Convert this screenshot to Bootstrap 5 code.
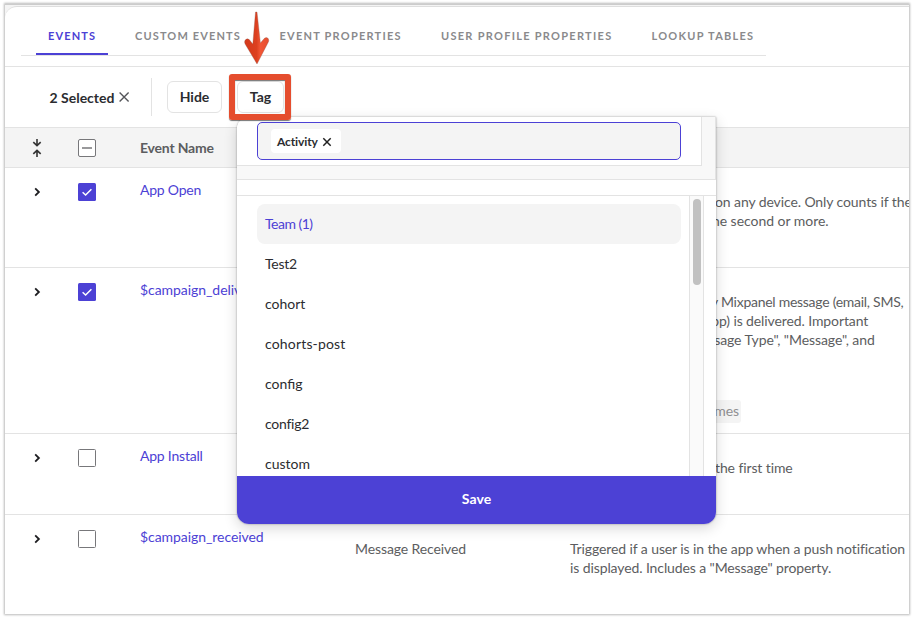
<!DOCTYPE html>
<html lang="en">
<head>
<meta charset="utf-8">
<meta name="viewport" content="width=device-width, initial-scale=1">
<title>Events</title>
<link href="https://cdn.jsdelivr.net/npm/bootstrap@5.3.0/dist/css/bootstrap.min.css" rel="stylesheet">
<style>
  :root { --brand: #4c41d5; --line: #e3e3e3; --ink: #2b2c30; --soft: #5c5d60; }
  body { font-family: Lato, sans-serif; font-size: 14px; line-height: 19px; color: var(--soft); background: #fff; height: 619px; overflow: hidden; }
  .frame { margin: 4px 5px 0 5px; height: 610px; width: 904px; border-top: 1px solid #ccc; background: #f4f4f4; box-shadow: 0 0 2px 1px rgba(0,0,0,.27); overflow: hidden; }
  .sheet { margin-top: 1px; height: 608px; border-top: 1px solid #dedede; border-radius: 12px 0 0 0; background: #fff; overflow: hidden; }
  .tabs-wrap { height: 60px; border-bottom: 1px solid var(--line); }
  .tabs { height: 49px; width: 745px; margin-left: 16px; padding-left: 15px; border-bottom: 1px solid var(--line); }
  .tab { height: 48px; padding: 19px 0 0 12px; font-size: 11px; font-weight: 700; line-height: 20px; letter-spacing: 1.23px; color: #8a8a8c; white-space: nowrap; }
  .tab.on { width: 72px; color: var(--brand); border-bottom: 2px solid var(--brand); letter-spacing: 1.15px; }
  .t2 { width: 144.5px; margin-left: 15px; letter-spacing: 1.14px; } .t3 { width: 161.5px; } .t4 { width: 210.5px; letter-spacing: 1.28px; } .t5 { letter-spacing: 1.26px; }
  .tools { height: 61px; border-bottom: 1px solid var(--line); color: var(--ink); font-weight: 700; }
  .picked { width: 147px; padding-left: 44.5px; height: 38px; border-right: 1px solid var(--line); margin-right: 15px; }
  .tool { height: 32px; border: 1px solid var(--line); border-radius: 6px; background: #fff; color: var(--ink); font-size: 14px; font-weight: 700; padding: 0; line-height: 30px; }
  .tool-hide { width: 55px; } .tool-tag { width: 47px; margin-left: 15px; }
  .line { display: grid; grid-template-columns: 73px 62px 215px 215px 1fr; border-bottom: 1px solid var(--line); white-space: nowrap; }
  .line > :first-child { padding-left: 26px; }
  .line svg { display: block; }
  .titles { height: 40px; background: #f4f4f4; font-weight: 700; align-items: center; }
  .titles span { display: block; margin-top: -1px; letter-spacing: -.2px; }
  .r1 { height: 100px; } .r2 { height: 166px; } .r3 { height: 81px; } .r4 { height: 100px; border-bottom: 0; }
  .line:not(.titles) > :first-child { padding-top: 18px; }
  .tick { padding-top: 15px; }
  .name { padding-top: 12px; color: var(--brand); letter-spacing: -.06px; }
  .name.tight { letter-spacing: -.22px; }
  .info { padding-top: 24px; letter-spacing: -.105px; }
  .key { color: #8f8f91; background: #f4f4f4; border-radius: 3px; width: 120px; height: 23px; line-height: 22px; margin: 51px 0 0 51px; text-align: right; padding-right: 2px; }
  .b1 { margin-left: 145px; letter-spacing: -.1px; } .b2 { margin-left: 134px; letter-spacing: -.03px; }
  .b3 { margin-left: 127px; letter-spacing: -.27px; } .b4 { margin-left: 131px; } .b5 { margin-left: 113px; letter-spacing: -.07px; } .b6 { margin-left: 145px; }
  .menu-pop { position: absolute; left: 237px; top: 117px; width: 479px; height: 407px; background: #fff; border-radius: 12px 0 12px 12px; box-shadow: 0 0 2px rgba(0,0,0,.4), 0 4px 14px rgba(0,0,0,.16); overflow: hidden; color: var(--ink); }
  .search { height: 63px; background: #f8f8f8; border-bottom: 1px solid var(--line); border-right: 1px solid var(--line); }
  .search-in { width: 465px; height: 49px; background: #fff; border-right: 1px solid var(--line); border-bottom: 1px solid var(--line); padding: 5px 0 0 20px; }
  .field { width: 424px; height: 38px; border: 1px solid var(--brand); border-radius: 5px; background: #f4f4f4; padding-left: 13px; }
  .chip { height: 24px; width: 70px; background: #fff; border-radius: 4px; font-size: 12px; font-weight: 700; padding-left: 6px; letter-spacing: -.12px; }
  .chip svg { margin-top: 1px; }
  .list-wrap { height: 281px; margin-top: 15px; border-top: 1px solid var(--line); overflow: hidden; }
  .opts { width: 452px; padding: 8px 8px 0 20px; flex: none; }
  .opt { height: 40px; line-height: 40px; border-radius: 8px; padding-left: 8px; }
  .opt.on { background: #f4f4f4; color: var(--brand); letter-spacing: -.5px; }
  .opt.tight { letter-spacing: -.25px; } .opt.wide { letter-spacing: .17px; }
  .rail { width: 15px; background: #fafafa; border: 1px solid var(--line); border-width: 0 1px; padding: 3px 3px 0 3px; height: 281px; }
  .thumb { width: 8px; height: 86px; border-radius: 4px; background: #c1c1c1; }
  .save { height: 48px; background: var(--brand); color: #fff; border: 0; border-radius: 0; font-weight: 700; font-size: 14px; width: 100%; padding: 0 0 3px; display: block; letter-spacing: .1px; }
  .mark-box { position: absolute; left: 229px; top: 74px; width: 62px; height: 46px; border: 6px solid #e54d2e; border-radius: 3px; box-shadow: 0 1px 1px rgba(0,0,0,.55), inset 0 1px 1px rgba(0,0,0,.55); }
  .mark-arrow { position: absolute; left: 240px; top: 10px; }
</style>
<script src="https://cdn.jsdelivr.net/npm/bootstrap@5.3.0/dist/js/bootstrap.bundle.min.js"></script>
</head>
<body>
<svg class="d-none">
  <symbol id="chev" viewBox="0 0 12 12"><path d="M4.2 2.4 7.9 6 4.2 9.6" fill="none" stroke="#1d1d20" stroke-width="1.8"/></symbol>
  <symbol id="box" viewBox="0 0 18 18"><rect x=".5" y=".5" width="17" height="17" rx="1" fill="#fff" stroke="#77777a"/></symbol>
  <symbol id="boxon" viewBox="0 0 18 18"><rect width="18" height="18" rx="1.5" fill="#4c41d5"/><path d="m4.6 9.2 3 2.8 5.8-5.8" fill="none" stroke="#fff" stroke-width="1.5"/></symbol>
</svg>
<main class="frame">
  <div class="sheet">
    <div class="tabs-wrap">
      <nav class="tabs d-flex">
        <div class="tab on">EVENTS</div>
        <div class="tab t2">CUSTOM EVENTS</div>
        <div class="tab t3">EVENT PROPERTIES</div>
        <div class="tab t4">USER PROFILE PROPERTIES</div>
        <div class="tab t5">LOOKUP TABLES</div>
      </nav>
    </div>
    <div class="tools d-flex align-items-center">
      <div class="picked d-flex align-items-center"><span>2 Selected</span>
        <svg class="ms-1" width="12" height="12" viewBox="0 0 12 12"><path d="m1.6 1.6 9 9m0-9-9 9" stroke="#55565a" stroke-width="1.4"/></svg>
      </div>
      <button class="tool tool-hide">Hide</button>
      <button class="tool tool-tag">Tag</button>
    </div>
    <div class="line titles">
      <div><svg width="12" height="18" viewBox="0 0 12 18"><path d="M6 0v6M2.3 3.2 6 6.7l3.7-3.5M6 18v-6M2.3 14.8 6 11.3l3.7 3.5" fill="none" stroke="#333" stroke-width="1.6"/></svg></div>
      <div><svg width="18" height="18" viewBox="0 0 18 18"><rect x=".5" y=".5" width="17" height="17" rx="1.5" fill="#fff" stroke="#77777a"/><path d="M4 9h10" stroke="#77777a" stroke-width="1.6"/></svg></div>
      <div><span>Event Name</span></div>
    </div>
    <div class="line r1">
      <div><svg width="12" height="12"><use href="#chev"/></svg></div>
      <div class="tick"><svg width="18" height="18"><use href="#boxon"/></svg></div>
      <div class="name tight">App Open</div><div></div>
      <div class="info"><div class="b1">on any device. Only counts if the</div><div class="b2">one second or more.</div></div>
    </div>
    <div class="line r2">
      <div><svg width="12" height="12"><use href="#chev"/></svg></div>
      <div class="tick"><svg width="18" height="18"><use href="#boxon"/></svg></div>
      <div class="name">$campaign_delivered</div><div></div>
      <div class="info"><div class="b3">any Mixpanel message (email, SMS,</div><div class="b4">(app) is delivered. Important</div><div class="b5">"Message Type", "Message", and</div><div class="key">names</div></div>
    </div>
    <div class="line r3">
      <div><svg width="12" height="12"><use href="#chev"/></svg></div>
      <div class="tick"><svg width="18" height="18"><use href="#box"/></svg></div>
      <div class="name tight">App Install</div><div></div>
      <div class="info"><div class="b6">the first time</div></div>
    </div>
    <div class="line r4">
      <div><svg width="12" height="12"><use href="#chev"/></svg></div>
      <div class="tick"><svg width="18" height="18"><use href="#box"/></svg></div>
      <div class="name">$campaign_received</div>
      <div class="info">Message Received</div>
      <div class="info"><div>Triggered if a user is in the app when a push notification</div><div>is displayed. Includes a "Message" property.</div></div>
    </div>
  </div>
</main>

<section class="menu-pop">
  <div class="search"><div class="search-in"><div class="field d-flex align-items-center"><div class="chip d-flex align-items-center"><span>Activity</span>
    <svg class="ms-1" width="10" height="10" viewBox="0 0 10 10"><path d="m1.3 1.3 7.4 7.4m0-7.4-7.4 7.4" stroke="#222" stroke-width="1.5"/></svg></div></div></div></div>
  <div class="list-wrap d-flex">
    <div class="opts">
      <div class="opt on">Team (1)</div>
      <div class="opt tight">Test2</div>
      <div class="opt">cohort</div>
      <div class="opt wide">cohorts-post</div>
      <div class="opt">config</div>
      <div class="opt tight">config2</div>
      <div class="opt">custom</div>
    </div>
    <div class="rail"><div class="thumb"></div></div>
  </div>
  <button class="save">Save</button>
</section>
<div class="mark-box"></div>
<svg class="mark-arrow" width="34" height="56" viewBox="0 0 34 56">
  <defs><linearGradient id="g"><stop offset=".1" stop-color="#d63a1c"/><stop offset=".5" stop-color="#dc4020"/><stop offset=".65" stop-color="#f25535"/><stop offset="1" stop-color="#e54d2e"/></linearGradient></defs>
  <path d="M15.500 2H17l3.400 31 4-4.700q2-1.500 3.800.2 1.200 2-.2 4.300L17 54 5.400 34.500q-1.500-2.500-.2-4.500 2-2 4-.5l3.600 4.500z" fill="url(#g)" stroke="#8a5a50" stroke-opacity=".45" stroke-width=".7"/>
</svg>
</body>
</html>
